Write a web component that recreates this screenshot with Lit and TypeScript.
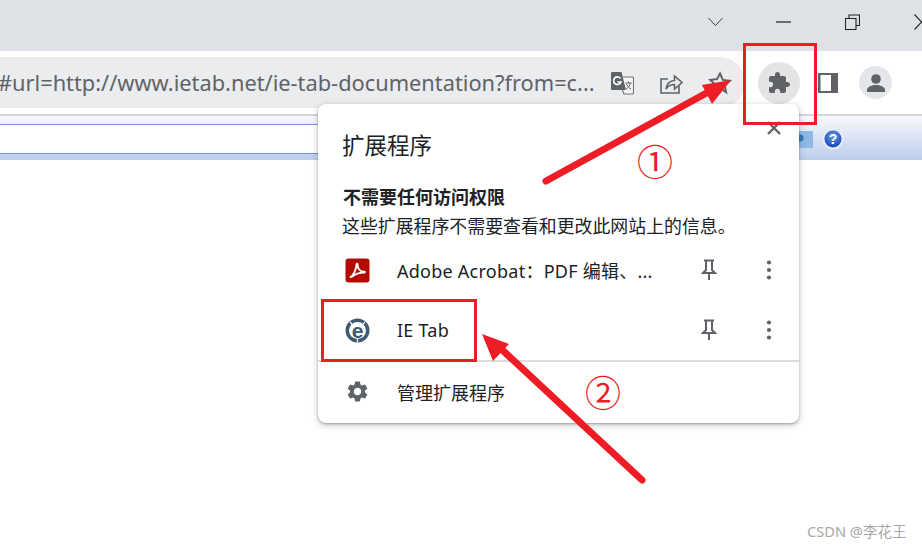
import { LitElement, html, css, unsafeCSS } from "lit";
import { customElement } from "lit/decorators.js";

const SANS = unsafeCSS(`"Noto Sans", "Noto Sans CJK SC", sans-serif`);

// material paths
const PUZZLE = "M20.5 11H19V7c0-1.1-.9-2-2-2h-4V3.5C13 2.12 11.88 1 10.5 1S8 2.12 8 3.5V5H4c-1.1 0-1.99.9-1.99 2v3.8H3.5c1.49 0 2.7 1.21 2.7 2.7s-1.21 2.7-2.7 2.7H2V20c0 1.1.9 2 2 2h3.8v-1.5c0-1.49 1.21-2.7 2.7-2.7 1.49 0 2.7 1.21 2.7 2.7V22H17c1.1 0 2-.9 2-2v-4h1.5c1.38 0 2.5-1.12 2.5-2.5S21.88 11 20.5 11z";
const GEAR = "M19.14 12.94c.04-.3.06-.61.06-.94 0-.32-.02-.64-.07-.94l2.03-1.58c.18-.14.23-.41.12-.61l-1.92-3.32c-.12-.22-.37-.29-.59-.22l-2.39.96c-.5-.38-1.03-.7-1.62-.94l-.36-2.54c-.04-.24-.24-.41-.48-.41h-3.84c-.24 0-.43.17-.47.41l-.36 2.54c-.59.24-1.13.57-1.62.94l-2.39-.96c-.22-.08-.47 0-.59.22L2.74 8.87c-.12.21-.08.47.12.61l2.03 1.58c-.05.3-.09.63-.09.94s.02.64.07.94l-2.03 1.58c-.18.14-.23.41-.12.61l1.92 3.32c.12.22.37.29.59.22l2.39-.96c.5.38 1.03.7 1.62.94l.36 2.54c.05.24.24.41.48.41h3.84c.24 0 .44-.17.47-.41l.36-2.54c.59-.24 1.13-.56 1.62-.94l2.39.96c.22.08.47 0 .59-.22l1.92-3.32c.12-.22.07-.47-.12-.61l-2.01-1.58zM12 15.6c-1.98 0-3.6-1.62-3.6-3.6s1.62-3.6 3.6-3.6 3.6 1.62 3.6 3.6-1.62 3.6-3.6 3.6z";

const pin = html`<svg class="pin" viewBox="0 0 16 22" width="16" height="22">
  <path d="M3 1.500h10M5 2v9l-3 3h12l-3-3V2M8 14v7" fill="none" stroke="#5f6368" stroke-width="2"></path>
</svg>`;

const dots = html`<svg viewBox="0 0 6 20" width="6" height="20">
  <circle cx="3" cy="2.500" r="2.100" fill="#5f6368"></circle>
  <circle cx="3" cy="10" r="2.100" fill="#5f6368"></circle>
  <circle cx="3" cy="17.500" r="2.100" fill="#5f6368"></circle>
</svg>`;

@customElement("ext-popup")
export class ExtPopup extends LitElement {
  static styles = css`
    :host {
      position: absolute;
      left: 318px;
      top: 104px;
      width: 481px;
      height: 319px;
      box-sizing: border-box;
      background: #fff;
      border-radius: 8px;
      box-shadow: 0 1px 2px rgba(60, 64, 67, 0.35), 0 2px 7px rgba(60, 64, 67, 0.3);
      font-family: ${SANS};
      color: #202124;
      display: flex;
      flex-direction: column;
    }
    .head {
      height: 62px;
      flex: none;
      display: flex;
      justify-content: space-between;
      padding: 10px 18px 0 24px;
      box-sizing: border-box;
    }
    h1 {
      margin: 0;
      font-weight: 400;
      font-size: 22.5px;
      line-height: 64px;
      height: 52px;
    }
    .close { margin-top: 7px; }
    .section { padding: 0 25px; height: 74px; flex: none; display: flex; flex-direction: column; }
    .section b { font-size: 18px; line-height: 30px; font-weight: 700; margin-top: 16px; }
    .section span { font-size: 17.9px; line-height: 30px; white-space: nowrap; margin: -1px 0 0 -1px; }
    .rows { flex: none; height: 120px; display: flex; flex-direction: column; }
    .row { height: 60px; display: flex; align-items: center; padding-left: 27px; }
    .row .ic { width: 25px; height: 25px; margin-right: 27px; flex: none; }
    .row .name { font-size: 18px; width: 303px; white-space: nowrap; letter-spacing: 0.25px; }
    .row .pin { margin-left: 1px; }
    .row .more { margin-left: 49px; display: flex; }
    hr { margin: 0; border: 0; height: 2px; background: #dadce0; flex: none; }
    .foot { flex: 1; display: flex; align-items: center; padding: 0 0 2px 27px; font-size: 18px; }
    .foot svg { width: 25px; height: 25px; margin-right: 27px; }
  `;

  render() {
    return html`
      <div class="head">
        <h1>扩展程序</h1>
        <svg class="close" viewBox="0 0 14 14" width="14" height="14">
          <path d="M1 1l12 12M13 1L1 13" stroke="#5f6368" stroke-width="2.400" fill="none"></path>
        </svg>
      </div>
      <div class="section">
        <b>不需要任何访问权限</b>
        <span>这些扩展程序不需要查看和更改此网站上的信息。</span>
      </div>
      <div class="rows">
        <div class="row">
          <svg class="ic" viewBox="0 0 25 25">
            <rect x="0.500" y="0.500" width="24" height="24" rx="3" fill="#b30b00"></rect>
            <path d="M5.500 19c3-1.500 5.500-7 6-12.500.1-1.200 1.400-1 1.200.5-.5 3.800 3 6.800 6.500 6.600 1 0 1 1-.2 1-4.500.2-8.500 1.200-11 3.400-1 .8-2.700 1.400-2.500 1z" fill="none" stroke="#fff" stroke-width="1.800"></path>
          </svg>
          <span class="name">Adobe Acrobat：PDF 编辑、...</span>
          ${pin}
          <span class="more">${dots}</span>
        </div>
        <div class="row">
          <svg class="ic" viewBox="0 0 25 25">
            <circle cx="12.500" cy="12.500" r="12" fill="#3d5a70"></circle>
            <path d="M5 4l3 3M20 4l-3 3M12.500 24v-4" stroke="#fff" stroke-width="1.200"></path>
            <circle cx="12.500" cy="12.500" r="8.500" fill="#fff"></circle>
            <text x="12.500" y="19.500" font-size="21" font-weight="700" font-family="Liberation Sans" text-anchor="middle" fill="#3d5a70">e</text>
          </svg>
          <span class="name">IE Tab</span>
          ${pin}
          <span class="more">${dots}</span>
        </div>
      </div>
      <hr />
      <div class="foot">
        <svg viewBox="0 0 24 24"><path d=${GEAR} fill="#5f6368"></path></svg>
        管理扩展程序
      </div>
    `;
  }
}

@customElement("app-root")
export class AppRoot extends LitElement {
  static styles = css`
    :host {
      display: block;
      position: relative;
      width: 922px;
      height: 549px;
      overflow: hidden;
      background: #fff;
      font-family: ${SANS};
    }
    .titlebar {
      height: 51px;
      background: #dee1e6;
      display: flex;
      justify-content: flex-end;
      align-items: center;
      padding-bottom: 7px;
      box-sizing: border-box;
      overflow: hidden;
    }
    .titlebar svg { flex: none; display: block; }
    .titlebar .chev { margin-right: 53px; }
    .titlebar .min { margin-right: 54px; }
    .titlebar .restore { margin-right: 54px; }
    .titlebar .x { margin-right: -7px; }
    .toolbar {
      height: 63px;
      display: flex;
      align-items: flex-start;
      overflow: hidden;
    }
    .omnibox {
      width: 745px;
      height: 51px;
      margin-top: 6px;
      flex: none;
      background: #ebecee;
      border-radius: 0 25px 25px 0;
      display: flex;
      align-items: center;
      box-sizing: border-box;
      overflow: hidden;
    }
    .url {
      width: 612px;
      flex: none;
      margin-left: -2px;
      margin-top: -1px;
      font-size: 21.8px;
      color: #5f6368;
      white-space: nowrap;
    }
    .omnibox svg { flex: none; }
    .omnibox .translate { margin-right: 25px; }
    .omnibox .share { margin-right: 25px; }
    .tools { display: flex; align-items: center; height: 51px; margin-top: 6px; }
    .puzzle {
      width: 42px;
      height: 42px;
      border-radius: 50%;
      background: #e4e4e4;
      display: grid;
      place-items: center;
      margin-left: 13px;
    }
    .panel { margin-left: 18px; }
    .avatar {
      width: 33px;
      height: 33px;
      border-radius: 50%;
      background: #e3e6ea;
      display: grid;
      place-items: center;
      margin-left: 21px;
    }
    .kebab { margin-left: 29px; flex: none; }
    .iebar {
      border-top: 2px solid #d6d6d6;
      background: linear-gradient(#f8f9fd, #bccdec);
      display: flex;
      padding-top: 8px;
      height: 36px;
      align-items: flex-start;
    }
    .field {
      width: 790px;
      height: 28px;
      background: #fff;
      border-top: 1px solid #6f93dc;
      border-bottom: 1px solid #6f93dc;
      flex: none;
    }
    .ieicons { display: flex; align-items: center; gap: 9px; margin-left: 7px; margin-top: 4px; }
    .overlay { position: absolute; left: 0; top: 0; pointer-events: none; }
    .num {
      position: absolute;
      color: #ee1c25;
      font-size: 36px;
      line-height: 40px;
      font-family: "Noto Sans CJK SC", sans-serif;
    }
    .n1 { left: 637px; top: 140px; }
    .n2 { left: 585px; top: 371px; }
    .mark {
      position: absolute;
      left: 807px;
      top: 522px;
      font-size: 14.6px;
      line-height: 18px;
      color: #a8a8a8;
      white-space: nowrap;
    }
  `;

  render() {
    return html`
      <div class="titlebar">
        <svg class="chev" width="15" height="10" viewBox="0 0 15 10"><path d="M.5 1l7 7.500 7-7.500" fill="none" stroke="#3c4043" stroke-width="1"></path></svg>
        <svg class="min" width="15" height="2" viewBox="0 0 15 2"><path d="M0 1h15" stroke="#202124" stroke-width="1.200"></path></svg>
        <svg class="restore" width="15" height="16" viewBox="0 0 15 16"><path d="M.5 4.500h10.500v11H.5zM4 4.500V1h10.500v10.500H11" fill="none" stroke="#202124" stroke-width="1.100"></path></svg>
        <svg class="x" width="15" height="16" viewBox="0 0 15 16"><path d="M.5.500l14 15M14.500.500l-14 15" stroke="#202124" stroke-width="1.100"></path></svg>
      </div>
      <div class="toolbar">
        <div class="omnibox">
          <span class="url">#url=http://www.ietab.net/ie-tab-documentation?from=c...</span>
          <svg class="translate" width="24" height="24" viewBox="0 0 24 24">
            <path d="M13 6h9.500a1 1 0 0 1 1 1v15a1 1 0 0 1-1 1H14l-2-5" fill="#f4f4f5" stroke="#6f7276" stroke-width="1.100"></path>
            <path d="M1 2a1 1 0 0 1 1-1h9.500l4.500 18H2a1 1 0 0 1-1-1z" fill="#5f6368"></path>
            <path d="M10.500 7.500A3.800 3.800 0 1 0 11 11H7.500" fill="none" stroke="#fff" stroke-width="1.600"></path>
            <path d="M15.500 12h6M18.500 10.500V12M20.500 12c-.5 3-3 5-4.500 6M16.500 13c.8 2 2.500 4 4.500 5" fill="none" stroke="#5f6368" stroke-width="1"></path>
          </svg>
          <svg class="share" width="24" height="24" viewBox="0 0 24 24">
            <path d="M20 15v7H2V8h7" fill="none" stroke="#5f6368" stroke-width="1.600"></path>
            <path d="M7 18c.5-5 4-8.500 8.500-8.500V5l7.500 6.500-7.500 6.500v-4.500c-3.500 0-6.500 1.500-8.500 4.500z" fill="none" stroke="#5f6368" stroke-width="1.600"></path>
          </svg>
          <svg width="24" height="24" viewBox="0 0 24 24">
            <path d="M12 2.500l2.900 6.400 7 .8-5.200 4.700 1.400 6.900L12 17l-6.100 3.500 1.400-6.900L2.100 8.900l7-.8z" fill="none" stroke="#5f6368" stroke-width="2"></path>
          </svg>
        </div>
        <div class="tools">
          <div class="puzzle">
            <svg width="24" height="24" viewBox="0 0 24 24"><path d=${PUZZLE} fill="#5f6368"></path></svg>
          </div>
          <svg class="panel" width="20" height="20" viewBox="0 0 20 20">
            <rect width="20" height="20" fill="#5f6368"></rect>
            <rect x="2.500" y="2" width="10.500" height="16" fill="#fff"></rect>
          </svg>
          <div class="avatar">
            <svg width="22" height="22" viewBox="0 0 22 22">
              <circle cx="11" cy="7" r="4.800" fill="#5f6368"></circle>
              <path d="M2 20v-2c0-3.500 5-5 9-5s9 1.500 9 5v2z" fill="#5f6368"></path>
            </svg>
          </div>
          <svg class="kebab" width="6" height="20" viewBox="0 0 6 20">
            <circle cx="3" cy="3" r="2" fill="#5f6368"></circle>
            <circle cx="3" cy="10" r="2" fill="#5f6368"></circle>
            <circle cx="3" cy="17" r="2" fill="#5f6368"></circle>
          </svg>
        </div>
      </div>
      <div class="iebar">
        <div class="field"></div>
        <div class="ieicons">
          <svg width="16" height="20" viewBox="0 0 16 20">
            <rect y="2" width="16" height="17" fill="#8fb8e4"></rect>
            <circle cx="3" cy="9" r="3.500" fill="#2f78b8"></circle>
          </svg>
          <svg width="22" height="22" viewBox="0 0 22 22">
            <defs>
              <radialGradient id="help" cx="50%" cy="35%" r="65%">
                <stop offset="0" stop-color="#6f9ff0"></stop>
                <stop offset="1" stop-color="#1247b4"></stop>
              </radialGradient>
            </defs>
            <circle cx="11" cy="11" r="10.500" fill="#e6edf9"></circle>
            <circle cx="11" cy="11" r="8.500" fill="url(#help)"></circle>
            <text x="11" y="16" font-size="14" font-weight="700" font-family="Liberation Sans" text-anchor="middle" fill="#fff">?</text>
          </svg>
        </div>
      </div>
      <ext-popup></ext-popup>
      <svg class="overlay" width="922" height="549" viewBox="0 0 922 549">
        <rect x="744.500" y="44.500" width="71" height="79" fill="none" stroke="#ee1c25" stroke-width="3"></rect>
        <rect x="322.500" y="300.500" width="153" height="60" fill="none" stroke="#ee1c25" stroke-width="3"></rect>
        <path d="M546 181L712 90" stroke="#ee1c25" stroke-width="7" stroke-linecap="round"></path>
        <path d="M731 80L702 85L712 104z" fill="#ee1c25"></path>
        <path d="M642 480L497 345" stroke="#ee1c25" stroke-width="7" stroke-linecap="round"></path>
        <path d="M482 334L509 344L493 361z" fill="#ee1c25"></path>
      </svg>
      <span class="num n1">①</span>
      <span class="num n2">②</span>
      <span class="mark">CSDN @李花王</span>
    `;
  }
}
